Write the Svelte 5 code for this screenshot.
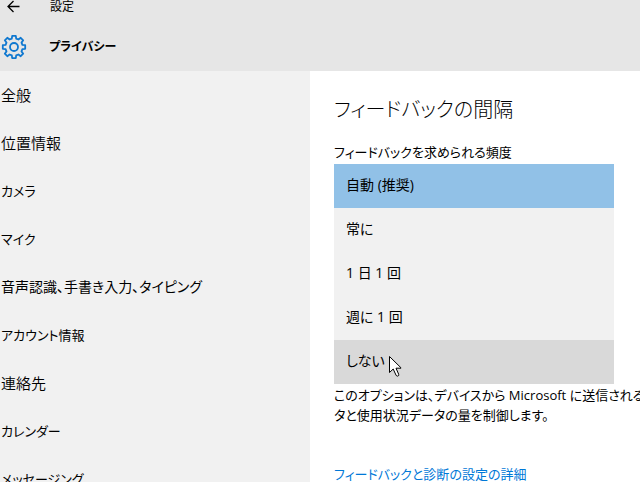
<script lang="ts">
    const sections = [
        { label: '全般', size: 'lg' },
        { label: '位置情報', size: 'lg' },
        { label: 'カメラ', size: 'sm' },
        { label: 'マイク', size: 'sm' },
        { label: '音声認識、手書き入力、タイピング', size: 'md' },
        { label: 'アカウント情報', size: 'sm' },
        { label: '連絡先', size: 'lg' },
        { label: 'カレンダー', size: 'sm' },
        { label: 'メッセージング', size: 'sm' }
    ];

    const frequencies = [
        { value: 'auto', label: '自動 (推奨)' },
        { value: 'always', label: '常に' },
        { value: 'daily', label: '1 日 1 回' },
        { value: 'weekly', label: '週に 1 回' },
        { value: 'never', label: 'しない' }
    ];

    let frequency = $state('auto');
    let hovered = $state('never');
</script>

<div class="window">
    <header>
        <div class="titlebar">
            <button class="back" aria-label="戻る">
                <svg width="13" height="13" viewBox="0 0 13 13">
                    <path d="M12.5 6.5H1M6.5 1L1 6.5L6.5 12" />
                </svg>
            </button>
            <span>設定</span>
        </div>
        <div class="heading">
            <svg class="gear" width="26" height="26" viewBox="0 0 26 26">
                <path
                    d="M10.8 4.6L11.2 1.8H14.8L15.2 4.6L17.4 5.5L19.7 3.8L22.2 6.3L20.5 8.6L21.4 10.8L24.2 11.2V14.8L21.4 15.2L20.5 17.4L22.2 19.7L19.7 22.2L17.4 20.5L15.2 21.4L14.8 24.2H11.2L10.8 21.4L8.6 20.5L6.3 22.2L3.8 19.7L5.5 17.4L4.6 15.2L1.8 14.8V11.2L4.6 10.8L5.5 8.6L3.8 6.3L6.3 3.8L8.6 5.5Z"
                />
                <circle cx="13" cy="13" r="4" />
            </svg>
            <h1>プライバシー</h1>
        </div>
    </header>

    <div class="body">
        <nav>
            {#each sections as section}
                <a href="#{section.label}" class={section.size}>{section.label}</a>
            {/each}
        </nav>

        <main>
            <h2>フィードバックの間隔</h2>
            <label for="frequency">フィードバックを求められる頻度</label>
            <div class="dropdown">
                <select id="frequency" size="5" bind:value={frequency}>
                    {#each frequencies as item}
                        <option
                            value={item.value}
                            class:hovered={hovered === item.value}
                            onmouseenter={() => (hovered = item.value)}
                        >
                            {item.label}
                        </option>
                    {/each}
                </select>
                <svg class="pointer" width="13" height="21" viewBox="0 0 13 21">
                    <path
                        d="M0.5 0.5V16.5L4.2 13L7.2 19.5Q8.5 20.8 9.7 19.5V18.3L7 12.2H12V11.8Z"
                    />
                </svg>
            </div>
            <p>
                このオプションは、デバイスから Microsoft に送信されるデー<br />
                タと使用状況データの量を制御します。
            </p>
            <a class="more" href="#details">フィードバックと診断の設定の詳細</a>
        </main>
    </div>
</div>

<style>
    :global(body) {
        margin: 0;
    }
    .window {
        display: flex;
        flex-direction: column;
        height: 100vh;
        overflow: hidden;
        background-color: #fff;
        color: #000;
        font-family: 'Open Sans', 'Noto Sans CJK JP', sans-serif;
        font-size: 13px;
        font-weight: 400;
        font-feature-settings: 'palt';
        line-height: 20px;
    }
    header {
        flex: none;
        background-color: #e6e6e6;
    }
    .titlebar {
        display: flex;
        align-items: flex-start;
        gap: 30px;
        height: 23px;
        padding-left: 7px;
        font-size: 12px;
        line-height: 14px;
    }
    .back {
        display: flex;
        padding: 0;
        border: none;
        background: none;
    }
    .back path {
        fill: none;
        stroke: #000;
        stroke-width: 1.3;
    }
    .heading {
        display: flex;
        align-items: center;
        gap: 22px;
        height: 48px;
        padding-left: 1px;
    }
    .gear {
        fill: none;
        stroke: #0f78d0;
        stroke-width: 1.8;
        stroke-linejoin: round;
    }
    h1 {
        margin: 0;
        font-size: 12px;
        font-weight: 700;
    }
    .body {
        display: flex;
        flex: 1;
        min-height: 0;
    }
    nav {
        flex: none;
        width: 310px;
        background-color: #f1f1f1;
    }
    nav a {
        display: block;
        padding: 14px 1px;
        color: #000;
        text-decoration: none;
    }
    nav a.md {
        font-size: 14px;
    }
    nav a.lg {
        font-size: 15px;
        font-weight: 350;
    }
    main {
        flex: 1;
        min-width: 0;
        padding: 24px 0 0 24px;
        overflow: hidden;
    }
    h2 {
        margin: 0 0 17px;
        font-size: 20px;
        font-weight: 300;
        line-height: 30px;
    }
    label {
        display: block;
        margin-bottom: 2px;
    }
    .dropdown {
        position: relative;
        max-width: 280px;
    }
    select {
        display: block;
        width: 100%;
        height: 220px;
        padding: 0;
        border: none;
        border-radius: 0;
        outline: none;
        overflow: hidden;
        background-color: #f1f1f1;
        color: #000;
        font: inherit;
        font-feature-settings: inherit;
    }
    option {
        height: 44px;
        padding: 10px 12px;
        box-sizing: border-box;
        font: inherit;
        font-size: 14px;
        font-feature-settings: inherit;
    }
    option.hovered {
        background-color: #d9d9d9;
    }
    option:checked {
        background: linear-gradient(#91c1e7, #91c1e7);
        color: #000;
    }
    .pointer {
        position: absolute;
        left: 55px;
        top: 192px;
        pointer-events: none;
        fill: #fff;
        stroke: #000;
    }
    p {
        margin: 1px 0 39px;
        white-space: nowrap;
    }
    .more {
        color: #0078d7;
        text-decoration: none;
    }
</style>
